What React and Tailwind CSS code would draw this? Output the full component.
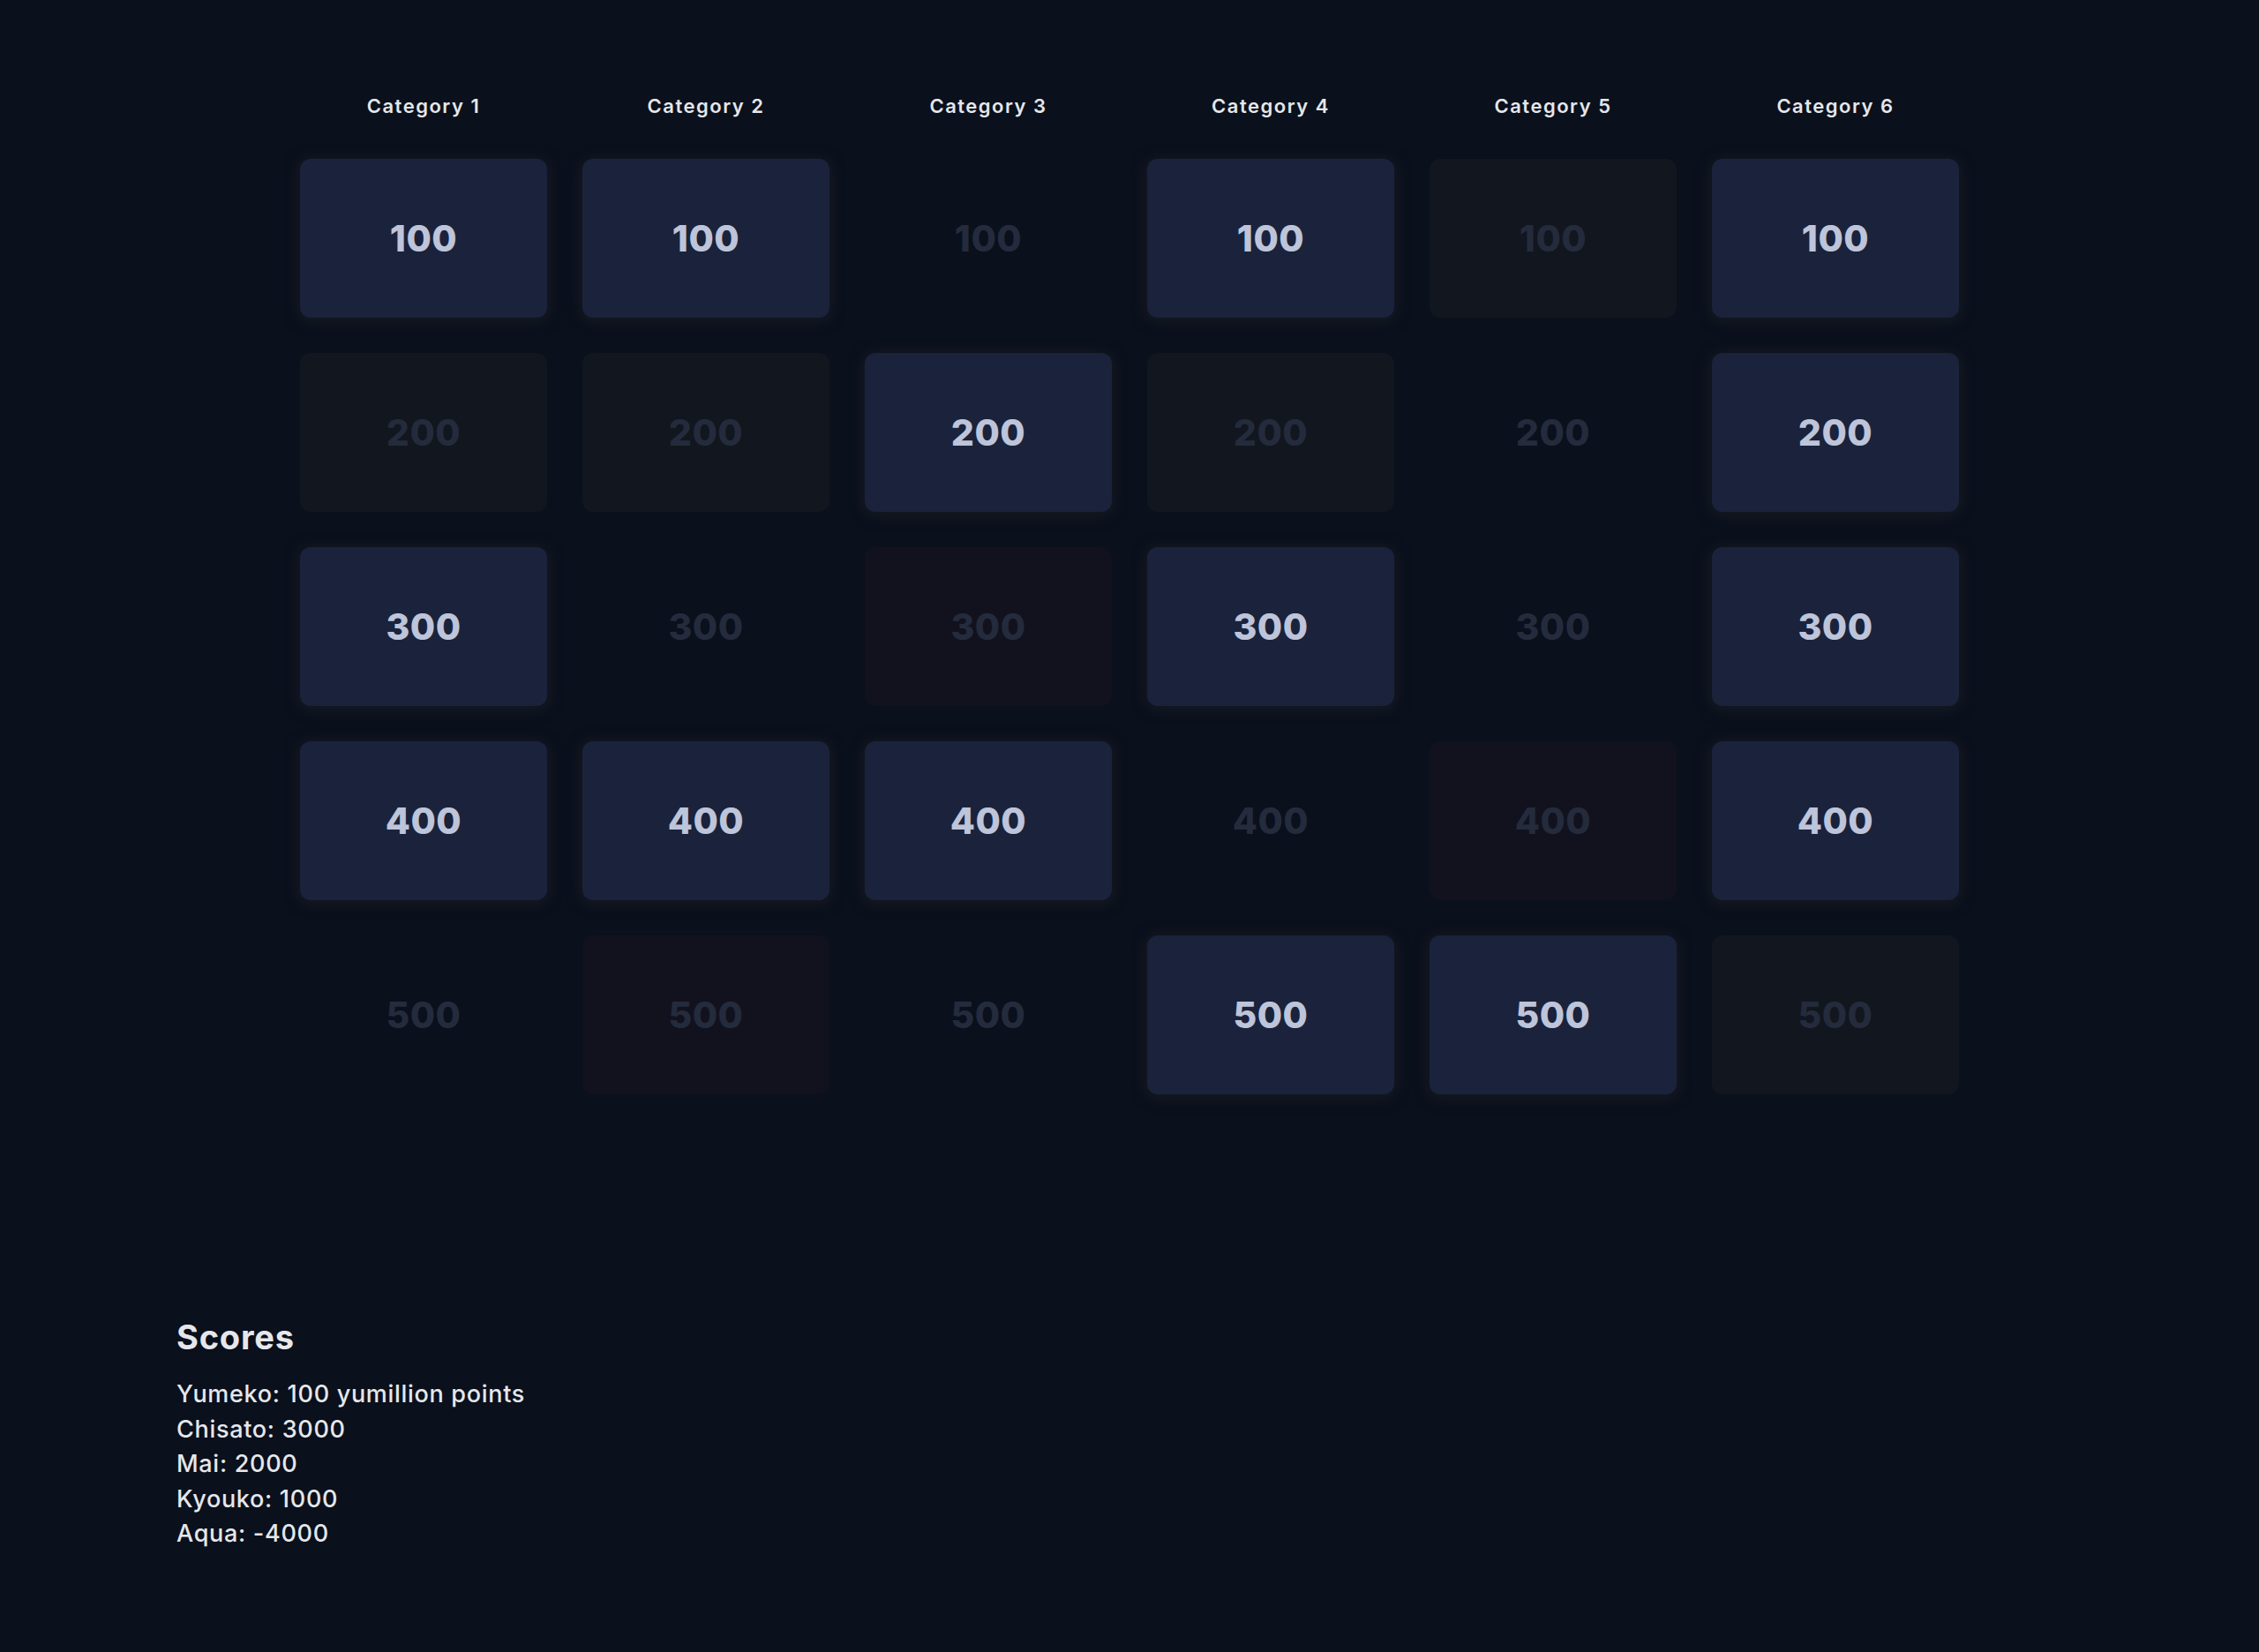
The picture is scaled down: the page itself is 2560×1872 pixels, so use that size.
import React from "react";

const A = "active", G = "gray", P = "purple", N = "none";
const rows = [
  [A, A, N, A, G, A],
  [G, G, A, G, N, A],
  [A, N, P, A, N, A],
  [A, A, A, N, P, A],
  [N, P, N, A, A, G],
];
const values = [100, 200, 300, 400, 500];

function Tile({ state, value }) {
  if (state === A) {
    return (
      <div className="h-[180px] rounded-[12px] bg-[#1a233b] shadow-[0_2px_14px_4px_rgba(22,26,34,0.9)] flex items-center justify-center pt-[2px]">
        <span className="text-[41px] font-extrabold text-[#bec4d9] tracking-[0.5px]">{value}</span>
      </div>
    );
  }
  const bg = state === G ? "bg-[#12161e]" : state === P ? "bg-[#12121f]" : "bg-transparent";
  return (
    <div className={`h-[180px] rounded-[12px] ${bg} flex items-center justify-center pt-[2px]`}>
      <span className="text-[41px] font-extrabold text-[#242b3c] tracking-[0.5px]">{value}</span>
    </div>
  );
}

export default function App() {
  return (
    <div className="min-h-screen bg-[#0a101c] font-['Inter',sans-serif] text-[#e5e7eb]">
      <div className="w-[1880px] mx-auto pt-[100px]">
        <div className="grid grid-cols-6 gap-x-[40px] mb-[40px]">
          {[1, 2, 3, 4, 5, 6].map((c) => (
            <div key={c} className="h-[40px] flex items-center justify-center text-[22px] font-semibold tracking-[1.5px] text-[#e5e7eb]">
              Category {c}
            </div>
          ))}
        </div>
        <div className="grid grid-cols-6 gap-[40px]">
          {rows.map((r, ri) =>
            r.map((s, ci) => <Tile key={`${ri}-${ci}`} state={s} value={values[ri]} />)
          )}
        </div>
      </div>
      <div className="pl-[200px] mt-[251px] pb-[80px]">
        <h2 className="text-[38px] leading-[48px] font-bold tracking-[0.8px] text-[#e5e7eb] mb-[21px]">Scores</h2>
        <div className="text-[27px] leading-[39.5px] font-medium tracking-[0.7px] text-[#e5e7eb]">
          <div>Yumeko: 100 yumillion points</div>
          <div>Chisato: 3000</div>
          <div>Mai: 2000</div>
          <div>Kyouko: 1000</div>
          <div>Aqua: -4000</div>
        </div>
      </div>
    </div>
  );
}
